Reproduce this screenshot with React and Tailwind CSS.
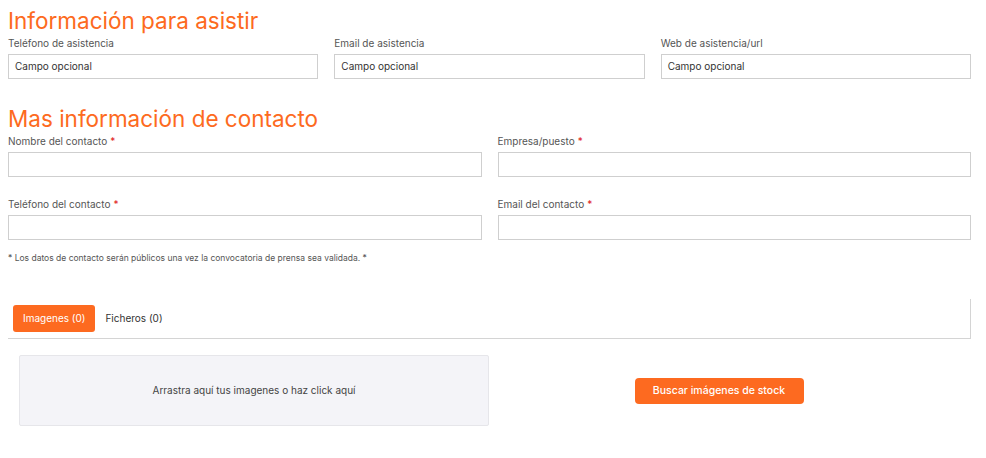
export default function App() {
  const font = { fontFamily: 'Inter, "Noto Sans", sans-serif' };
  const Label = ({ children, req }) => (
    <div className="text-[10px] leading-[12px] text-[#555] mb-[5px]">
      {children}
      {req && <span className="text-[#e02020] ml-[3px]">*</span>}
    </div>
  );
  const Input = ({ placeholder }) => (
    <div className="h-[25px] border border-[#cfcfcf] bg-white flex items-center px-[6px] text-[10px] text-[#333]">
      {placeholder}
    </div>
  );
  return (
    <div className="w-[986px] h-[458px] bg-white overflow-hidden" style={font}>
      <div className="pl-[8px] pr-[15px] pt-[8px]">
        <h2 className="text-[22.5px] leading-[26px] text-[#fd6a20] font-normal">Información para asistir</h2>
        <div className="grid grid-cols-3 gap-x-[16px] mt-[3px]">
          <div>
            <Label>Teléfono de asistencia</Label>
            <Input placeholder="Campo opcional" />
          </div>
          <div>
            <Label>Email de asistencia</Label>
            <Input placeholder="Campo opcional" />
          </div>
          <div>
            <Label>Web de asistencia/url</Label>
            <Input placeholder="Campo opcional" />
          </div>
        </div>
        <h2 className="text-[22.5px] leading-[26px] text-[#fd6a20] font-normal mt-[27px]">Mas información de contacto</h2>
        <div className="grid grid-cols-2 gap-x-[16px] gap-y-[21px] mt-[3px]">
          <div>
            <Label req>Nombre del contacto</Label>
            <Input />
          </div>
          <div>
            <Label req>Empresa/puesto</Label>
            <Input />
          </div>
          <div>
            <Label req>Teléfono del contacto</Label>
            <Input />
          </div>
          <div>
            <Label req>Email del contacto</Label>
            <Input />
          </div>
        </div>
        <div className="text-[8.5px] text-[#555] mt-[12px] leading-[12px]">* Los datos de contacto serán públicos una vez la convocatoria de prensa sea validada. *</div>
        <div className="mt-[35px] h-[40px] border-r border-b border-[#d4d4d4] flex items-start pt-[6px] pl-[5px] gap-[10px]">
          <div className="h-[27px] px-[10px] rounded-[3px] bg-[#fd6a20] text-white text-[10px] flex items-center">Imagenes (0)</div>
          <div className="h-[27px] text-[10px] text-[#333] flex items-center">Ficheros (0)</div>
        </div>
        <div className="flex mt-[16px] pl-[11px]">
          <div className="w-[470px] h-[71px] bg-[#f4f4f8] border border-[#e6e6ea] rounded-[2px] flex items-center justify-center text-[10px] text-[#444]">
            Arrastra aquí tus imagenes o haz click aquí
          </div>
          <div className="flex-1 flex items-center justify-center pr-[22px]">
            <div className="w-[169px] h-[26px] rounded-[4px] bg-[#fd6a20] text-white text-[10.5px] font-medium flex items-center justify-center">
              Buscar imágenes de stock
            </div>
          </div>
        </div>
      </div>
    </div>
  );
}
